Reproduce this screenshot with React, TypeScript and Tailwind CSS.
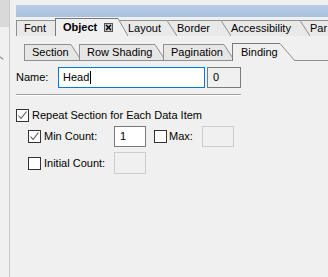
import type { ReactNode } from 'react';

const FONT = { fontFamily: '"Liberation Sans", Arial, sans-serif' };

function Slant({ w, h, fill }: { w: number; h: number; fill: string }) {
  return (
    <svg width={w} height={h} className="block" viewBox={`0 0 ${w} ${h}`}>
      <polygon points={`0,0 ${w},${h} 0,${h}`} fill={fill} />
      <line x1="0" y1="0.5" x2={w} y2={h} stroke="#8f8f8f" strokeWidth="1" />
    </svg>
  );
}

// top strip tab (earlier tabs sit above later ones)
function TopTab({
  label,
  w,
  first,
  z,
  extra,
}: {
  label: string;
  w: number;
  first?: boolean;
  z: string;
  extra?: ReactNode;
}) {
  return (
    <div
      className={`relative h-[16px] shrink-0 border-t border-[#8f8f8f] bg-[#e9e9e9] ${z} ${
        first ? 'border-l' : ''
      }`}
      style={{ width: w }}
    >
      <div
        className={`flex h-full items-center whitespace-nowrap leading-none text-black ${
          first ? 'pl-[7px]' : 'pl-[10px]'
        }`}
      >
        {label}
        {extra}
      </div>
      <div className="absolute left-full top-[-1px]">
        <Slant w={10} h={16} fill="#e9e9e9" />
      </div>
    </div>
  );
}

// inner strip tab (later tabs sit above earlier ones)
function SubTab({ label, w, z }: { label: string; w: number; z: string }) {
  return (
    <div
      className={`relative flex h-[17px] shrink-0 border-b border-[#8f8f8f] ${z}`}
      style={{ width: w }}
    >
      <div className="flex flex-1 items-center whitespace-nowrap border-l border-t border-[#8f8f8f] bg-[#e6e6e6] pl-[7px] leading-none text-black">
        {label}
      </div>
      <div className="w-[8px] overflow-hidden">
        <Slant w={10} h={16} fill="#e6e6e6" />
      </div>
    </div>
  );
}

function Check({ on }: { on?: boolean }) {
  return (
    <span className="flex h-[13px] w-[13px] shrink-0 items-center justify-center border border-[#333333] bg-white">
      {on && (
        <svg width="11" height="11" viewBox="0 0 11 11">
          <path d="M1.5 5.5 L4 8.5 L9.5 1.5" fill="none" stroke="#555555" strokeWidth="1.1" />
        </svg>
      )}
    </span>
  );
}

export default function App() {
  return (
    <div
      className="flex h-[277px] w-[328px] overflow-hidden bg-[#f0f0f0] text-[11px] text-black"
      style={FONT}
    >
      {/* left dock edge */}
      <div className="flex w-[10px] shrink-0 flex-col border-r border-[#c9c9c9]">
        <div className="h-[27px] bg-[#d9d9d9]" />
        <div className="relative flex-1">
          <svg width="4" height="4" className="absolute left-0 top-[29px]">
            <path d="M0 0.5 L3 3.5" stroke="#444" strokeWidth="1" />
          </svg>
        </div>
      </div>

      <div className="flex flex-1 flex-col">
        <div className="ml-[6px] mt-[5px] h-[12px] bg-gradient-to-b from-[#b7cde6] to-[#a9c1de]" />

        {/* top tabs */}
        <div className="ml-[6px] flex h-[19px] items-end">
          <TopTab label="Font" w={39} first z="z-[6]" />
          <div
            className="relative z-10 flex h-[18px] shrink-0 items-center whitespace-nowrap border-l border-t border-[#7a7a7a] bg-[#f0f0f0] pl-[7px] font-bold leading-none"
            style={{ width: 63 }}
          >
            Object
            <span className="ml-[7px] flex h-[9px] w-[9px] items-center justify-center border border-[#555555] bg-[#c6c6c6]">
              <svg width="7" height="7" viewBox="0 0 7 7">
                <path d="M1 1 L6 6 M6 1 L1 6" stroke="#000" strokeWidth="1.4" />
              </svg>
            </span>
            <div className="absolute left-full top-[-1px]">
              <Slant w={10} h={18} fill="#f0f0f0" />
            </div>
          </div>
          <TopTab label="Layout" w={49} z="z-[5]" />
          <TopTab label="Border" w={54} z="z-[4]" />
          <TopTab label="Accessibility" w={79} z="z-[3]" />
          <TopTab label="Par" w={28} z="z-[2]" />
        </div>

        {/* sub tabs */}
        <div className="ml-[14px] mt-[7px] flex h-[18px] items-end">
          <SubTab label="Section" w={55} z="z-[1]" />
          <SubTab label="Row Shading" w={84} z="z-[2]" />
          <SubTab label="Pagination" w={69} z="z-[3]" />
          <div
            className="relative z-[4] flex h-[18px] shrink-0 items-center whitespace-nowrap border-l border-t border-[#7a7a7a] bg-[#f0f0f0] pl-[8px] leading-none"
            style={{ width: 48 }}
          >
            Binding
          </div>
          <Slant w={15} h={18} fill="#f0f0f0" />
          <div className="h-[18px] flex-1 border-b border-[#8f8f8f]" />
        </div>

        {/* name */}
        <div className="ml-[6px] mt-[6px] flex h-[21px] items-center">
          <span className="w-[42px]">Name:</span>
          <div className="flex h-[21px] w-[147px] items-center border border-[#0078d7] bg-white pl-[4px]">
            Head
            <span className="ml-[1px] h-[13px] w-px bg-black" />
          </div>
          <div className="ml-[2px] flex h-[21px] w-[34px] items-center border border-[#7a7a7a] bg-[#f0f0f0] pl-[5px]">
            0
          </div>
        </div>

        <div className="ml-[6px] mt-[6px] h-[2px] w-[225px] border-t border-[#a0a0a0] border-b border-b-white" />

        {/* repeat options */}
        <div className="ml-[6px] mt-[11px] flex h-[16px] items-center gap-[3px] leading-none">
          <Check on />
          <span className="whitespace-nowrap">Repeat Section for Each Data Item</span>
        </div>

        <div className="ml-[18px] mt-[3px] flex h-[21px] items-center leading-none">
          <Check on />
          <span className="ml-[3px] w-[70px] whitespace-nowrap">Min Count:</span>
          <div className="flex h-[21px] w-[32px] items-center border border-[#7a7a7a] bg-white pl-[5px]">1</div>
          <span className="ml-[8px]">
            <Check />
          </span>
          <span className="ml-[2px] w-[33px] whitespace-nowrap">Max:</span>
          <div className="h-[21px] w-[32px] border border-[#cccccc] bg-[#f0f0f0]" />
        </div>

        <div className="ml-[18px] mt-[5px] flex h-[22px] items-center leading-none">
          <Check />
          <span className="ml-[3px] w-[70px] whitespace-nowrap">Initial Count:</span>
          <div className="h-[22px] w-[32px] border border-[#cccccc] bg-[#f0f0f0]" />
        </div>
      </div>
    </div>
  );
}
